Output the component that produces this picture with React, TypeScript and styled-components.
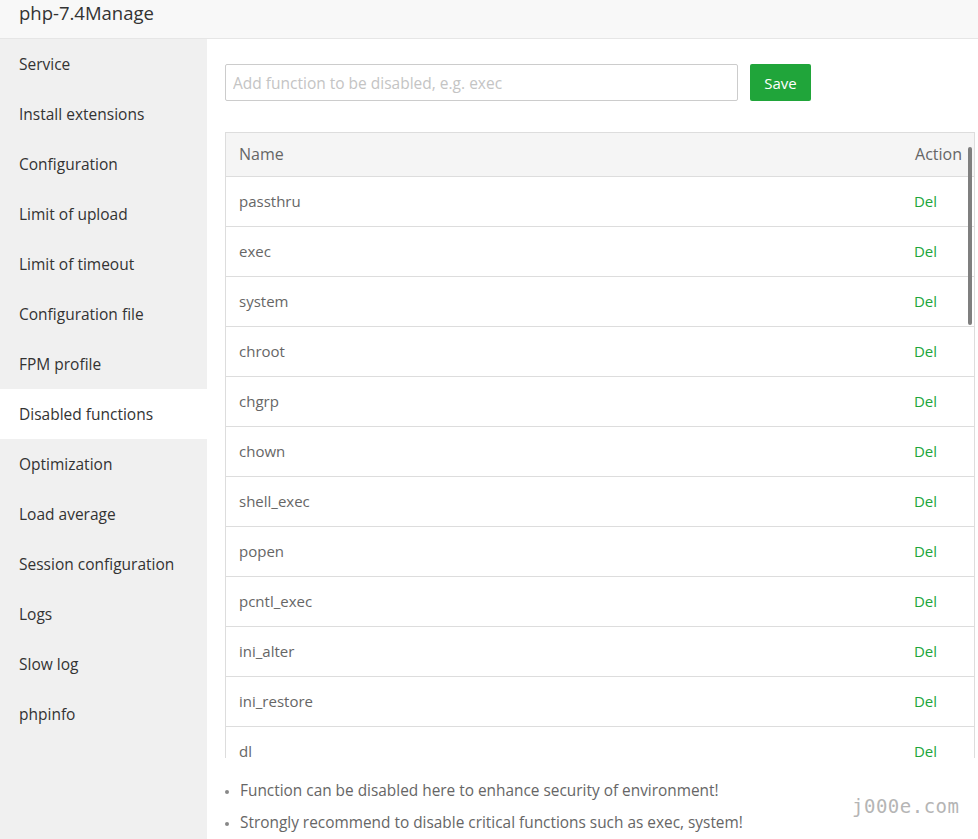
import React from 'react'
import styled, { createGlobalStyle } from 'styled-components'

const menu = [
	'Service',
	'Install extensions',
	'Configuration',
	'Limit of upload',
	'Limit of timeout',
	'Configuration file',
	'FPM profile',
	'Disabled functions',
	'Optimization',
	'Load average',
	'Session configuration',
	'Logs',
	'Slow log',
	'phpinfo',
]

const functions = [
	'passthru',
	'exec',
	'system',
	'chroot',
	'chgrp',
	'chown',
	'shell_exec',
	'popen',
	'pcntl_exec',
	'ini_alter',
	'ini_restore',
	'dl',
	'openlog',
	'syslog',
]

const GlobalStyle = createGlobalStyle`
	html, body {
		margin: 0;
		padding: 0;
		background: #fff;
		font-family: "Open Sans", "Noto Sans", Arial, sans-serif;
	}
	* { box-sizing: border-box; }
`

export default function App() {
	return (
		<Page>
			<GlobalStyle />
			<Header>php-7.4Manage</Header>
			<Body>
				<Sidebar>
					{menu.map(item => (
						<MenuItem key={item} active={item === 'Disabled functions'}>{item}</MenuItem>
					))}
				</Sidebar>
				<Content>
					<AddRow>
						<Input placeholder="Add function to be disabled, e.g. exec" />
						<SaveButton>Save</SaveButton>
					</AddRow>
					<TableBox>
						<Table>
							<thead>
								<tr>
									<Th>Name</Th>
									<Th align="right">Action</Th>
								</tr>
							</thead>
							<tbody>
								{functions.map(fn => (
									<tr key={fn}>
										<Td>{fn}</Td>
										<ActionCell><DelLink>Del</DelLink></ActionCell>
									</tr>
								))}
							</tbody>
						</Table>
						<ScrollThumb />
					</TableBox>
					<Notes>
						<li>Function can be disabled here to enhance security of environment!</li>
						<li>Strongly recommend to disable critical functions such as exec, system!</li>
					</Notes>
					<Watermark>j000e.com</Watermark>
				</Content>
			</Body>
		</Page>
	)
}

const Page = styled.div`
	width: 978px;
	height: 839px;
	overflow: hidden;
	display: flex;
	flex-direction: column;
	color: #333;
`

const Header = styled.div`
	height: 39px;
	flex-shrink: 0;
	padding-left: 19px;
	line-height: 25px;
	font-size: 18.5px;
	color: #333;
	background: #f8f8f8;
	border-bottom: 1px solid #e6e6e6;
`

const Body = styled.div`
	flex: 1;
	display: flex;
	min-height: 0;
`

const Sidebar = styled.div`
	width: 207px;
	flex-shrink: 0;
	background: #f0f0f0;
`

const MenuItem = styled.div<{ active?: boolean }>`
	height: 50px;
	line-height: 50px;
	padding-left: 19px;
	font-size: 15.5px;
	color: #333;
	background: ${({ active }) => active ? '#fff' : 'transparent'};
`

const Content = styled.div`
	position: relative;
	flex: 1;
	padding: 25px 3px 0 18px;
	background: #fff;
`

const AddRow = styled.div`
	display: flex;
	gap: 12px;
	margin-bottom: 31px;
`

const Input = styled.input`
	width: 513px;
	height: 37px;
	padding: 0 7px;
	border: 1px solid #ccc;
	border-radius: 2px;
	font-family: inherit;
	font-size: 15.5px;
	color: #555;
	outline: none;
	&::placeholder { color: #c4c4c4; }
`

const SaveButton = styled.button`
	width: 61px;
	height: 37px;
	border: none;
	border-radius: 2px;
	background: #20a53a;
	color: #fff;
	font-family: inherit;
	font-size: 15px;
`

const TableBox = styled.div`
	position: relative;
	width: 750px;
	height: 626px;
	overflow: hidden;
	border: 1px solid #ddd;
	border-bottom: none;
`

const Table = styled.table`
	width: 100%;
	border-collapse: collapse;
	font-size: 15px;
`

const Th = styled.th<{ align?: string }>`
	height: 43px;
	padding: 0 12px 0 13px;
	background: #f5f5f5;
	text-align: ${({ align }) => align || 'left'};
	font-weight: normal;
	font-size: 16px;
	color: #666;
	border-bottom: 1px solid #ddd;
`

const Td = styled.td`
	height: 50px;
	padding: 0 13px;
	color: #666;
	border-bottom: 1px solid #ddd;
`

const ActionCell = styled(Td)`
	text-align: right;
	padding-right: 37px;
`

const DelLink = styled.a`
	color: #20a53a;
	cursor: pointer;
`

const ScrollThumb = styled.div`
	position: absolute;
	right: 2px;
	top: 14px;
	width: 4px;
	height: 178px;
	border-radius: 2px;
	background: #7f7f7f;
`

const Notes = styled.ul`
	margin: 17px 0 0;
	padding-left: 15px;
	font-size: 15.4px;
	color: #666;
	li {
		line-height: 32px;
	}
	li::marker { font-size: 11px; color: #888; }
`

const Watermark = styled.div`
	position: absolute;
	left: 645px;
	top: 756px;
	font-family: "DejaVu Sans Mono", monospace;
	font-size: 19px;
	color: #b5b5b5;
	letter-spacing: 0.5px;
`
